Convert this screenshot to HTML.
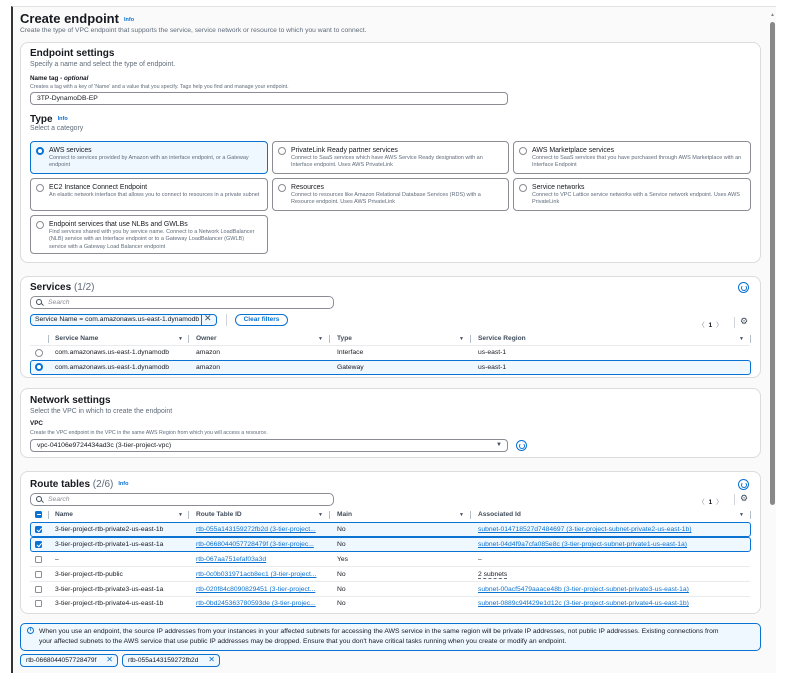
<!DOCTYPE html>
<html><head><meta charset="utf-8"><style>
*{box-sizing:border-box;margin:0;padding:0}
body{width:790px;height:688px;background:#fff;font-family:"Liberation Sans",sans-serif;color:#16191f;position:relative;overflow:hidden}
.a{position:absolute;white-space:nowrap}
.bg{position:absolute;left:11px;top:6px;width:765px;height:667px;background:#fafafa;border-left:2px solid #333;border-top:1px solid #e2e2e2}
.panel{position:absolute;left:20px;width:741px;background:#fff;border:1px solid #dcdcdc;border-radius:8px}
.h1{font-size:13px;font-weight:bold}
.h2{font-size:10px;font-weight:bold}
.info{font-size:5.5px;color:#0972d3;font-weight:bold;margin-left:5px;vertical-align:middle}
.sub{font-size:6.9px;color:#5f6b7a}
.lbl{font-size:6.3px;font-weight:bold}
.hlp{font-size:5.3px;color:#5f6b7a}
.inp{position:absolute;border:1px solid #8c8c94;border-radius:4px;background:#fff;font-size:6.8px;padding:2px 6px;line-height:8px}
.card{position:absolute;border:1px solid #8c8c94;border-radius:4px;background:#fff;padding:5px 6px 0 18px}
.card.sel{border-color:#0972d3;background:#f0f8ff}
.card b{display:block;font-weight:normal;font-size:6.9px;color:#16191f}
.card span{display:block;font-size:5.5px;color:#5f6b7a;line-height:7.3px;margin-top:1px;white-space:normal}
.rad{position:absolute;width:8px;height:8px;border-radius:50%;border:1px solid #8c8c94;background:#fff}
.rad.on{border:2.5px solid #0972d3}
.card .rad{left:5px;top:5px}
.th{font-size:6.6px;font-weight:bold;color:#414d5c}
.td{font-size:6.75px}
.lnk{color:#0972d3;text-decoration:underline}
.sep{position:absolute;width:1px;height:8px;background:#b6bec9}
.arr{position:absolute;font-size:5px;color:#414d5c}
.line{position:absolute;height:1px;background:#e9ebed}
.hl{position:absolute;border:1px solid #0972d3;background:#f0f8ff;border-radius:3px}
.cb{position:absolute;width:7px;height:7px;border:1px solid #8c8c94;border-radius:1.5px;background:#fff}
.cb.on{background:#0972d3;border-color:#0972d3}
.cb.on:after{content:"";position:absolute;left:1.5px;top:0px;width:2px;height:3.5px;border:solid #fff;border-width:0 1px 1px 0;transform:rotate(40deg)}
.ref{position:absolute;width:11px;height:11px;border:1.5px solid #0972d3;border-radius:50%}
.ref:after{content:"";position:absolute;left:2px;top:2px;width:4px;height:4px;border:1.3px solid #0972d3;border-radius:50%;border-top-color:transparent}
.tag{position:absolute;border:1px solid #0972d3;border-radius:4px;background:#f0f8ff;font-size:6.6px;padding:2px 5px;height:13px}
.srch{position:absolute;width:6px;height:6px;border:1px solid #414d5c;border-radius:50%}
.srch:after{content:"";position:absolute;left:4px;top:4px;width:3px;height:1px;background:#414d5c;transform:rotate(45deg)}
</style></head><body>
<div class="bg"></div>
<div class="a" style="left:770px;top:22px;width:5px;height:483px;background:#888;border-radius:3px"></div>
<div class="a" style="left:770px;top:12px;font-size:5px;color:#888">▲</div>

<div class="a h1" style="left:20px;top:11px">Create endpoint<span class="info">Info</span></div>
<div class="a sub" style="left:20px;top:27px;font-size:6.7px">Create the type of VPC endpoint that supports the service, service network or resource to which you want to connect.</div>

<div class="panel" style="top:42px;height:221px"></div>
<div class="a h2" style="left:30px;top:48px">Endpoint settings</div>
<div class="a sub" style="left:30px;top:61px">Specify a name and select the type of endpoint.</div>
<div class="a lbl" style="left:30px;top:75px">Name tag - <i>optional</i></div>
<div class="a hlp" style="left:30px;top:84px">Creates a tag with a key of 'Name' and a value that you specify. Tags help you find and manage your endpoint.</div>
<div class="inp" style="left:30px;top:92px;width:478px;height:13px">3TP-DynamoDB-EP</div>
<div class="a h2" style="left:30px;top:114px">Type<span class="info">Info</span></div>
<div class="a sub" style="left:30px;top:125px">Select a category</div>

<div class="card sel" style="left:30px;top:141px;width:238px;height:33px"><i class="rad on"></i><b>AWS services</b><span>Connect to services provided by Amazon with an interface endpoint, or a Gateway endpoint</span></div>
<div class="card" style="left:272px;top:141px;width:237px;height:33px"><i class="rad"></i><b>PrivateLink Ready partner services</b><span>Connect to SaaS services which have AWS Service Ready designation with an Interface endpoint. Uses AWS PrivateLink</span></div>
<div class="card" style="left:513px;top:141px;width:238px;height:33px"><i class="rad"></i><b>AWS Marketplace services</b><span>Connect to SaaS services that you have purchased through AWS Marketplace with an Interface Endpoint</span></div>
<div class="card" style="left:30px;top:178px;width:238px;height:33px"><i class="rad"></i><b>EC2 Instance Connect Endpoint</b><span>An elastic network interface that allows you to connect to resources in a private subnet</span></div>
<div class="card" style="left:272px;top:178px;width:237px;height:33px"><i class="rad"></i><b>Resources</b><span>Connect to resources like Amazon Relational Database Services (RDS) with a Resource endpoint. Uses AWS PrivateLink</span></div>
<div class="card" style="left:513px;top:178px;width:238px;height:33px"><i class="rad"></i><b>Service networks</b><span>Connect to VPC Lattice service networks with a Service network endpoint. Uses AWS PrivateLink</span></div>
<div class="card" style="left:30px;top:215px;width:238px;height:39px"><i class="rad"></i><b>Endpoint services that use NLBs and GWLBs</b><span>Find services shared with you by service name. Connect to a Network LoadBalancer (NLB) service with an Interface endpoint or to a Gateway LoadBalancer (GWLB) service with a Gateway Load Balancer endpoint</span></div>

<!-- Services -->
<div class="panel" style="top:276px;height:102px"></div>
<div class="a h2" style="left:30px;top:282px">Services <span style="font-weight:normal;color:#5f6b7a">(1/2)</span></div>
<div class="ref" style="left:738px;top:282px"></div>
<div class="inp" style="left:30px;top:296px;width:304px;height:13px;border-radius:5px;color:#8c8c94;font-style:italic;padding-left:17px">Search</div>
<div class="srch" style="left:36px;top:299px"></div>
<div class="a" style="left:30px;top:314px;width:187px;height:12px;border:1px solid #0972d3;border-radius:4px;background:#f0f8ff"></div>
<div class="a td" style="left:35px;top:316px">Service Name = com.amazonaws.us-east-1.dynamodb</div>
<div class="a" style="left:201px;top:314px;width:1px;height:12px;background:#0972d3"></div>
<div class="a" style="left:204px;top:313px;font-size:9px;color:#414d5c">✕</div>
<div class="a" style="left:226px;top:314px;width:1px;height:12px;background:#d1d5db"></div>
<div class="a" style="left:235px;top:314px;width:53px;height:12px;border:1px solid #0972d3;border-radius:7px;font-size:6.5px;font-weight:bold;color:#0972d3;text-align:center;line-height:10px">Clear filters</div>
<div class="a td" style="left:698px;top:319px;color:#8c8c94">〈 <b style="color:#16191f">&nbsp;1&nbsp;</b> 〉</div>
<div class="a" style="left:734px;top:317px;width:1px;height:11px;background:#d1d5db"></div>
<div class="a" style="left:740px;top:316px;font-size:9px;color:#414d5c">⚙</div>
<div class="sep" style="left:48px;top:335px"></div>
<div class="a th" style="left:55px;top:335px">Service Name</div><div class="arr" style="left:178px;top:336px">▼</div><div class="sep" style="left:188px;top:335px"></div>
<div class="a th" style="left:196px;top:335px">Owner</div><div class="arr" style="left:318px;top:336px">▼</div><div class="sep" style="left:329px;top:335px"></div>
<div class="a th" style="left:337px;top:335px">Type</div><div class="arr" style="left:459px;top:336px">▼</div><div class="sep" style="left:470px;top:335px"></div>
<div class="a th" style="left:478px;top:335px">Service Region</div><div class="arr" style="left:739px;top:336px">▼</div><div class="sep" style="left:750px;top:335px"></div>
<div class="line" style="left:30px;top:345px;width:720px"></div>
<div class="rad" style="left:35px;top:349px"></div>
<div class="a td" style="left:55px;top:349px">com.amazonaws.us-east-1.dynamodb</div><div class="a td" style="left:196px;top:349px">amazon</div><div class="a td" style="left:337px;top:349px">Interface</div><div class="a td" style="left:478px;top:349px">us-east-1</div>
<div class="hl" style="left:30px;top:360px;width:721px;height:15px"></div>
<div class="rad on" style="left:35px;top:363px"></div>
<div class="a td" style="left:55px;top:364px">com.amazonaws.us-east-1.dynamodb</div><div class="a td" style="left:196px;top:364px">amazon</div><div class="a td" style="left:337px;top:364px">Gateway</div><div class="a td" style="left:478px;top:364px">us-east-1</div>

<!-- Network -->
<div class="panel" style="top:388px;height:70px"></div>
<div class="a h2" style="left:30px;top:395px">Network settings</div>
<div class="a sub" style="left:30px;top:408px">Select the VPC in which to create the endpoint</div>
<div class="a lbl" style="left:30px;top:420px">VPC</div>
<div class="a hlp" style="left:30px;top:430px">Create the VPC endpoint in the VPC in the same AWS Region from which you will access a resource.</div>
<div class="inp" style="left:30px;top:439px;width:478px;height:13px">vpc-04106e9724434ad3c (3-tier-project-vpc)</div>
<div class="a" style="left:496px;top:442px;font-size:6px;color:#414d5c">▼</div>
<div class="ref" style="left:516px;top:440px"></div>

<!-- Route tables -->
<div class="panel" style="top:471px;height:143px"></div>
<div class="a h2" style="left:30px;top:479px">Route tables <span style="font-weight:normal;color:#5f6b7a">(2/6)</span><span class="info">Info</span></div>
<div class="ref" style="left:738px;top:479px"></div>
<div class="inp" style="left:30px;top:493px;width:304px;height:13px;border-radius:5px;color:#8c8c94;font-style:italic;padding-left:17px">Search</div>
<div class="srch" style="left:36px;top:496px"></div>
<div class="a td" style="left:698px;top:496px;color:#8c8c94">〈 <b style="color:#16191f">&nbsp;1&nbsp;</b> 〉</div>
<div class="a" style="left:734px;top:494px;width:1px;height:11px;background:#d1d5db"></div>
<div class="a" style="left:740px;top:493px;font-size:9px;color:#414d5c">⚙</div>
<div class="a" style="left:35px;top:511px;width:7px;height:7px;background:#0972d3;border-radius:1.5px"></div>
<div class="a" style="left:36.5px;top:514px;width:4px;height:1.2px;background:#fff"></div>
<div class="sep" style="left:48px;top:511px"></div>
<div class="a th" style="left:55px;top:511px">Name</div><div class="arr" style="left:178px;top:512px">▼</div><div class="sep" style="left:188px;top:511px"></div>
<div class="a th" style="left:196px;top:511px">Route Table ID</div><div class="arr" style="left:318px;top:512px">▼</div><div class="sep" style="left:329px;top:511px"></div>
<div class="a th" style="left:337px;top:511px">Main</div><div class="arr" style="left:459px;top:512px">▼</div><div class="sep" style="left:470px;top:511px"></div>
<div class="a th" style="left:478px;top:511px">Associated Id</div><div class="arr" style="left:739px;top:512px">▼</div><div class="sep" style="left:750px;top:511px"></div>
<div class="hl" style="left:30px;top:522px;width:721px;height:15px"></div>
<div class="hl" style="left:30px;top:537px;width:721px;height:15px"></div>
<div class="line" style="left:30px;top:566px;width:720px"></div>
<div class="line" style="left:30px;top:581px;width:720px"></div>
<div class="line" style="left:30px;top:596px;width:720px"></div>

<div class="cb on" style="left:35px;top:526px"></div>
<div class="a td" style="left:55px;top:526px">3-tier-project-rtb-private2-us-east-1b</div><div class="a td lnk" style="left:196px;top:526px">rtb-055a143159272fb2d (3-tier-project...</div><div class="a td" style="left:337px;top:526px">No</div><div class="a td lnk" style="left:478px;top:526px">subnet-014718527d7484697 (3-tier-project-subnet-private2-us-east-1b)</div>
<div class="cb on" style="left:35px;top:541px"></div>
<div class="a td" style="left:55px;top:541px">3-tier-project-rtb-private1-us-east-1a</div><div class="a td lnk" style="left:196px;top:541px">rtb-0668044057728479f (3-tier-projec...</div><div class="a td" style="left:337px;top:541px">No</div><div class="a td lnk" style="left:478px;top:541px">subnet-04d4f9a7cfa085e8c (3-tier-project-subnet-private1-us-east-1a)</div>
<div class="cb" style="left:35px;top:556px"></div>
<div class="a td" style="left:55px;top:556px">–</div><div class="a td lnk" style="left:196px;top:556px">rtb-067aa751efaf03a3d</div><div class="a td" style="left:337px;top:556px">Yes</div><div class="a td" style="left:478px;top:556px">–</div>
<div class="cb" style="left:35px;top:571px"></div>
<div class="a td" style="left:55px;top:571px">3-tier-project-rtb-public</div><div class="a td lnk" style="left:196px;top:571px">rtb-0c0b031971acb8ec1 (3-tier-project...</div><div class="a td" style="left:337px;top:571px">No</div><div class="a td" style="left:478px;top:571px;border-bottom:1px dashed #5f6b7a">2 subnets</div>
<div class="cb" style="left:35px;top:586px"></div>
<div class="a td" style="left:55px;top:586px">3-tier-project-rtb-private3-us-east-1a</div><div class="a td lnk" style="left:196px;top:586px">rtb-020f84c8090829451 (3-tier-project...</div><div class="a td" style="left:337px;top:586px">No</div><div class="a td lnk" style="left:478px;top:586px">subnet-00acf5479aaace48b (3-tier-project-subnet-private3-us-east-1a)</div>
<div class="cb" style="left:35px;top:600px"></div>
<div class="a td" style="left:55px;top:600px">3-tier-project-rtb-private4-us-east-1b</div><div class="a td lnk" style="left:196px;top:600px">rtb-0bd245363780593de (3-tier-projec...</div><div class="a td" style="left:337px;top:600px">No</div><div class="a td lnk" style="left:478px;top:600px">subnet-0889c94f429e1d12c (3-tier-project-subnet-private4-us-east-1b)</div>

<!-- alert -->
<div class="a" style="left:20px;top:623px;width:741px;height:28px;border:1px solid #0972d3;border-radius:5px;background:#f0f8ff"></div>
<div class="a" style="left:27px;top:627px;width:7px;height:7px;border:1px solid #0972d3;border-radius:50%;font-size:5px;color:#0972d3;text-align:center;line-height:5px;font-weight:bold">i</div>
<div class="a td" style="left:39px;top:627px;line-height:9.5px;white-space:normal;width:690px">When you use an endpoint, the source IP addresses from your instances in your affected subnets for accessing the AWS service in the same region will be private IP addresses, not public IP addresses. Existing connections from your affected subnets to the AWS service that use public IP addresses may be dropped. Ensure that you don't have critical tasks running when you create or modify an endpoint.</div>

<div class="tag" style="left:20px;top:654px;width:98px">rtb-0668044057728479f <span style="color:#0972d3;font-size:8px;position:absolute;right:4px;top:0">✕</span></div>
<div class="tag" style="left:122px;top:654px;width:98px">rtb-055a143159272fb2d <span style="color:#0972d3;font-size:8px;position:absolute;right:4px;top:0">✕</span></div>
</body></html>
